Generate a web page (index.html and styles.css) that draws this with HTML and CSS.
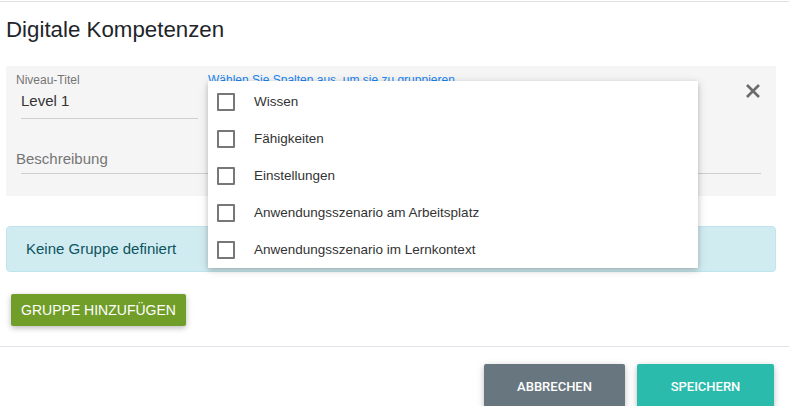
FILE: index.html
```html
<!DOCTYPE html>
<html lang="de">
<head>
<meta charset="utf-8">
<title>Digitale Kompetenzen</title>
<link rel="stylesheet" href="styles.css">
</head>
<body>
<div class="modal">
  <h2 class="title">Digitale Kompetenzen</h2>
  <div class="panel">
    <div class="row-top">
      <div class="field field-title">
        <div class="label">Niveau-Titel</div>
        <div class="input">Level 1</div>
      </div>
      <div class="field-group">
        <div class="group-label">Wählen Sie Spalten aus, um sie zu gruppieren</div>
        <ul class="dropdown">
          <li class="option"><span class="check"></span><span>Wissen</span></li>
          <li class="option"><span class="check"></span><span>Fähigkeiten</span></li>
          <li class="option"><span class="check"></span><span>Einstellungen</span></li>
          <li class="option"><span class="check"></span><span>Anwendungsszenario am Arbeitsplatz</span></li>
          <li class="option"><span class="check"></span><span>Anwendungsszenario im Lernkontext</span></li>
        </ul>
      </div>
      <button class="close" aria-label="Schließen">
        <svg width="16" height="16" viewBox="0 0 16 16"><path d="M2 2 L14 14 M14 2 L2 14" stroke="#6b6b6b" stroke-width="2.6" fill="none"/></svg>
      </button>
    </div>
    <div class="field field-desc">
      <div class="input placeholder">Beschreibung</div>
    </div>
  </div>
  <div class="alert">Keine Gruppe definiert</div>
  <button class="btn btn-add">GRUPPE HINZUFÜGEN</button>
  <div class="footer">
    <button class="btn btn-cancel">ABBRECHEN</button>
    <button class="btn btn-save">SPEICHERN</button>
  </div>
</div>
</body>
</html>
```

FILE: styles.css
```css
* { box-sizing: border-box; }
html, body { margin: 0; padding: 0; background: #fff; }
body {
  font-family: "Liberation Sans", Arial, sans-serif;
  color: #212529;
  padding-top: 1px;
  overflow: hidden;
}
.modal {
  border-top: 1px solid #e0e0e0;
  height: 405px;
}
.title {
  margin: 0;
  padding: 15px 0 0 6px;
  font-size: 22.3px;
  line-height: 26px;
  font-weight: 400;
  color: #212529;
  height: 64px;
}
.panel {
  margin: 0 13px 0 6px;
  background: #f5f5f5;
  padding: 6px 15px 22px 10px;
}
.row-top {
  display: flex;
  height: 53px;
}
.field-title { width: 192px; flex: none; }
.label {
  font-size: 12px;
  line-height: 14px;
  color: #757575;
  padding-top: 1px;
}
.input {
  font-size: 15px;
  line-height: 18px;
  color: #333;
  border-bottom: 1px solid #cfcfcf;
  margin-left: 5px;
  padding: 5px 0 8px 0;
}
.field-title .input { width: 177px; }
.field-group {
  flex: 1;
  position: relative;
}
.group-label {
  font-size: 12px;
  line-height: 14px;
  color: #1a84f0;
  padding-top: 1px;
}
.dropdown {
  position: absolute;
  left: 0;
  top: 9px;
  width: 490px;
  margin: 0;
  padding: 2px 0 0 0;
  list-style: none;
  background: #fff;
  box-shadow: 0 2px 5px rgba(0,0,0,0.18), 0 2px 10px rgba(0,0,0,0.12);
  z-index: 5;
  height: 187px;
}
.option {
  display: flex;
  align-items: center;
  height: 37px;
  padding-left: 9px;
  font-size: 13.5px;
  color: #333;
}
.check {
  width: 18px;
  height: 18px;
  border: 2px solid #777;
  border-radius: 1px;
  margin-right: 19px;
  flex: none;
}
.close {
  background: none;
  border: 0;
  padding: 0;
  width: 16px;
  height: 16px;
  margin: 11px 0 0 0;
  cursor: pointer;
}
.field-desc { margin-top: 25px; }
.field-desc .input {
  margin-left: 0;
  padding: 0 0 6px 0;
  border-bottom: 0;
  position: relative;
}
.field-desc .input::after {
  content: "";
  position: absolute;
  left: 5px;
  right: 0;
  bottom: 0;
  border-bottom: 1px solid #cfcfcf;
}
.placeholder { color: #757575; }
.alert {
  margin: 30px 13px 0 6px;
  height: 46px;
  background: #d1ecf1;
  border: 1px solid #bee5eb;
  border-radius: 4px;
  color: #0c5460;
  font-size: 15px;
  line-height: 18px;
  padding: 13px 19px;
}
.btn {
  border: 0;
  color: #fff;
  cursor: pointer;
  font-family: "Liberation Sans", Arial, sans-serif;
}
.btn-add {
  display: block;
  margin: 22px 0 0 11px;
  width: 175px;
  height: 32px;
  background: #709e28;
  border-radius: 2px;
  font-size: 14px;
  padding: 0;
  box-shadow: 0 2px 5px rgba(0,0,0,0.18), 0 2px 8px rgba(0,0,0,0.1);
}
.footer {
  margin-top: 20px;
  border-top: 1px solid #e2e2ea;
  display: flex;
  justify-content: flex-end;
  gap: 12px;
  padding: 17px 15px 0 0;
}
.btn-cancel, .btn-save {
  height: 44px;
  border-radius: 2px;
  font-family: Roboto, "Liberation Sans", sans-serif;
  font-weight: 500;
  font-size: 13px;
  padding: 0;
  box-shadow: 0 2px 5px rgba(0,0,0,0.16), 0 2px 10px rgba(0,0,0,0.12);
}
.btn-cancel { width: 141px; background: #68777f; }
.btn-save { width: 137px; background: #2bbbad; }
```
